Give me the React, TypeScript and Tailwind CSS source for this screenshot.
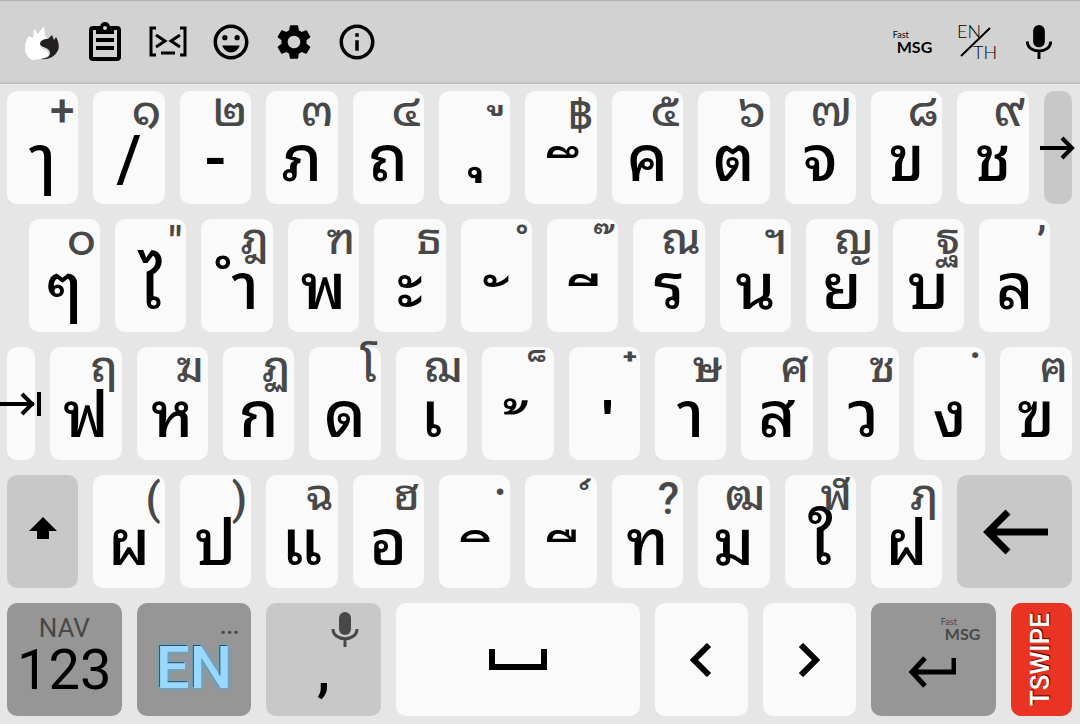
import type { ReactNode } from "react";
import clsx from "clsx";
import { MdInfoOutline, MdOutlineEmojiEmotions, MdSettings } from "react-icons/md";

type LetterKey = { label: string; hint: string };

const NB = "\u00a0";

const row1: LetterKey[] = [
  { label: "ๅ", hint: "+" },
  { label: "/", hint: "๑" },
  { label: "-", hint: "๒" },
  { label: "ภ", hint: "๓" },
  { label: "ถ", hint: "๔" },
  { label: NB + "\u0e38", hint: NB + "\u0e39" },
  { label: NB + "\u0e36", hint: "฿" },
  { label: "ค", hint: "๕" },
  { label: "ต", hint: "๖" },
  { label: "จ", hint: "๗" },
  { label: "ข", hint: "๘" },
  { label: "ช", hint: "๙" },
];

const row2: LetterKey[] = [
  { label: "ๆ", hint: "๐" },
  { label: "ไ", hint: '"' },
  { label: NB + "\u0e33", hint: "ฎ" },
  { label: "พ", hint: "ฑ" },
  { label: "ะ", hint: "ธ" },
  { label: NB + "\u0e31", hint: NB + "\u0e4d" },
  { label: NB + "\u0e35", hint: NB + "\u0e4a" },
  { label: "ร", hint: "ณ" },
  { label: "น", hint: "ฯ" },
  { label: "ย", hint: "ญ" },
  { label: "บ", hint: "ฐ" },
  { label: "ล", hint: "’" },
];

const row3: LetterKey[] = [
  { label: "ฟ", hint: "ฤ" },
  { label: "ห", hint: "ฆ" },
  { label: "ก", hint: "ฏ" },
  { label: "ด", hint: "โ" },
  { label: "เ", hint: "ฌ" },
  { label: NB + "\u0e49", hint: NB + "\u0e47" },
  { label: NB + "\u0e48", hint: NB + "\u0e4b" },
  { label: "า", hint: "ษ" },
  { label: "ส", hint: "ศ" },
  { label: "ว", hint: "ซ" },
  { label: "ง", hint: "." },
  { label: "ฃ", hint: "ฅ" },
];

const row4: LetterKey[] = [
  { label: "ผ", hint: "(" },
  { label: "ป", hint: ")" },
  { label: "แ", hint: "ฉ" },
  { label: "อ", hint: "ฮ" },
  { label: NB + "\u0e34", hint: NB + "\u0e3a" },
  { label: NB + "\u0e37", hint: NB + "\u0e4c" },
  { label: "ท", hint: "?" },
  { label: "ม", hint: "ฒ" },
  { label: "ใ", hint: "ฬ" },
  { label: "ฝ", hint: "ฦ" },
];

const tones = {
  light: "bg-[#fafafa]",
  gray: "bg-[#c8c8c8]",
  dark: "bg-[#969696]",
  red: "bg-[#e93323]",
};

// Combining marks have no base letter here, so they are moved into the key's visual centre.
const upperVowel = /[\u0e34-\u0e37]/;
const aboveMark = /[\u0e31\u0e34-\u0e37\u0e47-\u0e4d]/;
const belowMark = /[\u0e38-\u0e3a]/;

function labelOffset(label: string) {
  if (belowMark.test(label)) return "pb-3 pl-2";
  if (upperVowel.test(label)) return "pt-[60px] pl-6";
  if (aboveMark.test(label)) return "pt-[60px] pl-2";
  return "pt-6";
}

function hintOffset(hint: string) {
  if (belowMark.test(hint) || hint === ".") return "-top-6";
  if (aboveMark.test(hint)) return "top-2";
  if (/[\u0e01-\u0e3e\u0e40-\u0e5b+]/.test(hint)) return "top-0";
  return "top-1";
}

function Key({
  width,
  tone = "light",
  name,
  children,
}: {
  width: string;
  tone?: keyof typeof tones;
  name?: string;
  children: ReactNode;
}) {
  return (
    <div className={clsx("shrink-0 pt-[7px] pr-2 pb-2 pl-[7px]", width)}>
      <button
        type="button"
        aria-label={name}
        className={clsx(
          "relative flex h-[113px] w-full items-center justify-center rounded-[10px]",
          tones[tone],
        )}
      >
        {children}
      </button>
    </div>
  );
}

function LetterKeys({ keys, width = "w-[8%]" }: { keys: LetterKey[]; width?: string }) {
  return keys.map((key) => (
    <Key key={key.label} width={width}>
      <span
        className={clsx(
          "text-[64px] leading-[88px] font-medium whitespace-pre",
          labelOffset(key.label),
        )}
      >
        {key.label}
      </span>
      <span
        className={clsx(
          "absolute right-1 text-[44px] leading-[40px] font-medium whitespace-pre text-[#484848]",
          hintOffset(key.hint),
        )}
      >
        {key.hint}
      </span>
    </Key>
  ));
}

function ToolButton({ name, children }: { name: string; children: ReactNode }) {
  return (
    <button
      type="button"
      aria-label={name}
      className="flex h-full w-[63px] items-center justify-center"
    >
      {children}
    </button>
  );
}

function FastMsg() {
  return (
    <span className="flex flex-col items-start font-['Lato']">
      <span className="text-[9px] leading-[10px]">Fast</span>
      <span className="pl-1 text-[16px] leading-[14px] font-bold">MSG</span>
    </span>
  );
}

function FlameIcon() {
  return (
    <svg width="36" height="38" viewBox="0 0 36 38">
      <path
        fill="#fff"
        d="M1 25c0-5 1-8 4-12l4 2 1-9 4 5 6-8 1 10 2 1c-1 3-6 4-7 7-1 4 5 5 8 8 3 5-5 7-15 8C4 35 1 31 1 25Z"
      />
      <path
        fill="#231f20"
        d="M17 36c7 1 13-2 16-7 3-4 2-10-1-15l-2 3-2-5-4 4c-5 0-8 2-8 5 1 4 10 3 10 9 0 4-4 5-9 6Z"
      />
    </svg>
  );
}

function ClipboardIcon() {
  return (
    <svg width="32" height="40" viewBox="0 0 32 40">
      <rect x="2" y="6" width="28" height="31" rx="2" fill="none" stroke="#000" strokeWidth="4" />
      <path d="M7 6h18v6H7zM7 16h18v4H7zM7 24h18v4H7z" />
      <circle cx="16" cy="5" r="5" />
      <circle cx="16" cy="6" r="2" fill="#d2d2d2" />
    </svg>
  );
}

function KaomojiIcon() {
  return (
    <svg width="38" height="32" viewBox="0 0 38 32" fill="none" stroke="#000" strokeWidth="3">
      <path d="M7 2H2v27h5M31 2h5v27h-5" />
      <path d="M7 9l9 6-9 6M31 9l-9 6 9 6" />
      <path d="M12 27h14" />
    </svg>
  );
}

function MicIcon({ className }: { className?: string }) {
  return (
    <svg className={className} viewBox="0 0 28 38">
      <rect x="8" y="1" width="12" height="23" rx="6" fill="currentColor" />
      <path
        d="M2 18c0 13 24 13 24 0M14 27v9"
        fill="none"
        stroke="currentColor"
        strokeWidth="3"
      />
    </svg>
  );
}

function Arrow({
  width,
  height,
  d,
  weight,
}: {
  width: number;
  height: number;
  d: string;
  weight: number;
}) {
  return (
    <svg
      className="shrink-0"
      width={width}
      height={height}
      viewBox={`0 0 ${width} ${height}`}
      fill="none"
      stroke="#000"
      strokeWidth={weight}
    >
      <path d={d} />
    </svg>
  );
}

export default function App() {
  return (
    <div className="overflow-hidden bg-[#e6e6e6] font-['Roboto','Noto_Sans_Thai_Looped','Noto_Looped_Thai','Loma','Garuda','Waree','Noto_Sans_Thai',sans-serif] text-black">
      <header className="flex h-[84px] items-center justify-between border-t border-[#b0b0b0] bg-[#d2d2d2] px-[10px] pb-px shadow-[inset_0_-3px_3px_-2px_#b4b4b4]">
        <div className="flex h-full">
          <ToolButton name="Themes">
            <FlameIcon />
          </ToolButton>
          <ToolButton name="Clipboard">
            <ClipboardIcon />
          </ToolButton>
          <ToolButton name="Kaomoji">
            <KaomojiIcon />
          </ToolButton>
          <ToolButton name="Emoji">
            <MdOutlineEmojiEmotions size={42} />
          </ToolButton>
          <ToolButton name="Settings">
            <MdSettings size={42} />
          </ToolButton>
          <ToolButton name="Info">
            <MdInfoOutline size={42} />
          </ToolButton>
        </div>
        <div className="flex h-full">
          <ToolButton name="Fast message">
            <FastMsg />
          </ToolButton>
          <ToolButton name="Switch EN/TH">
            <svg
              width="38"
              height="42"
              viewBox="0 -2 38 42"
              className="overflow-visible font-['Lato'] font-light"
            >
              <text x="0" y="15" fontSize="18">EN</text>
              <text x="16" y="36" fontSize="18">TH</text>
              <path d="M4 33 33 5" stroke="#000" strokeWidth="2" />
            </svg>
          </ToolButton>
          <ToolButton name="Voice">
            <MicIcon className="h-[37px] w-7" />
          </ToolButton>
        </div>
      </header>

      <main>
        <div className="flex">
          <LetterKeys keys={row1} />
          <Key width="w-[4%]" tone="gray" name="Next">
            <Arrow width={36} height={24} weight={4} d="M0 12H33M22 2l10 10-10 10" />
          </Key>
        </div>
        <div className="flex px-[2%]">
          <LetterKeys keys={row2} width="w-[calc(100%/12)]" />
        </div>
        <div className="flex">
          <Key width="w-[4%]" name="Tab">
            <Arrow width={42} height={24} weight={4} d="M0 12H34M22 2l10 10-10 10M39 0v24" />
          </Key>
          <LetterKeys keys={row3} />
        </div>
        <div className="flex">
          <Key width="w-[8%]" tone="gray" name="Shift">
            <svg width="28" height="30" viewBox="0 0 28 30">
              <path d="M14 0 28 14H20V22H8V14H0Z" />
            </svg>
          </Key>
          <LetterKeys keys={row4} />
          <Key width="w-[12%]" tone="gray" name="Backspace">
            <Arrow width={66} height={46} weight={7} d="M66 23H5M26 3 6 23l20 20" />
          </Key>
        </div>
        <div className="flex">
          <Key width="w-[12%]" tone="dark">
            <span className="flex flex-col items-center pb-2">
              <span className="text-[26px] leading-7 text-[#484848]">NAV</span>
              <span className="text-[56px] leading-[56px]">123</span>
            </span>
          </Key>
          <Key width="w-[12%]" tone="dark">
            <span className="pt-4 text-[60px] leading-[64px] font-medium text-[#99d9ff] [text-shadow:-1px_-1px_0_#24506c,0_0_5px_#40b0ec]">
              EN
            </span>
            <span className="absolute top-2 right-3 text-[22px] leading-8 font-bold text-[#484848]">
              ...
            </span>
          </Key>
          <Key width="w-[12%]" tone="gray">
            <span className="pt-5 text-[60px] leading-[88px] font-medium">,</span>
            <MicIcon className="absolute top-2 right-[22px] h-[38px] w-7 text-[#484848]" />
          </Key>
          <Key width="w-[24%]" name="Space">
            <Arrow width={58} height={22} weight={6} d="M3 0V18H55V0" />
          </Key>
          <Key width="w-[10%]" name="Left">
            <Arrow width={22} height={34} weight={6} d="M19 2 4 17l15 15" />
          </Key>
          <Key width="w-[10%]" name="Right">
            <Arrow width={22} height={34} weight={6} d="m3 2 15 15L3 32" />
          </Key>
          <Key width="w-[13%]" tone="dark" name="Enter">
            <span className="pt-6 pr-1">
              <Arrow width={48} height={32} weight={5} d="M46 2V16H4M17 2 4 16l13 14" />
            </span>
            <span className="absolute top-[14px] right-4 text-[#484848]">
              <FastMsg />
            </span>
          </Key>
          <Key width="w-[7%]" tone="red">
            <span className="rotate-180 pl-1 text-[26px] leading-8 font-medium text-white [text-shadow:1px_1px_1px_#400] [writing-mode:vertical-rl]">
              TSWIPE
            </span>
          </Key>
        </div>
      </main>
    </div>
  );
}
